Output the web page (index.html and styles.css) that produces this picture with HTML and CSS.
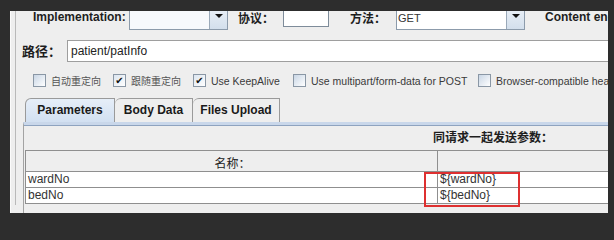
FILE: index.html
```html
<!DOCTYPE html>
<html>
<head>
<meta charset="utf-8">
<link rel="stylesheet" href="styles.css">
</head>
<body>
<div class="panel">
  <div class="content">
    <div class="row1">
      <span class="lbl lbl-impl">Implementation:</span>
      <div class="combo combo-impl">
        <div class="combo-field"></div>
        <div class="combo-btn"><span class="tri"></span></div>
      </div>
      <span class="lbl lbl-cjk lbl-proto">协议：</span>
      <div class="tfield"></div>
      <span class="lbl lbl-cjk lbl-method">方法：</span>
      <div class="combo combo-method">
        <div class="combo-field"><span class="combo-text">GET</span></div>
        <div class="combo-btn"><span class="tri"></span></div>
      </div>
      <span class="lbl lbl-enc">Content encoding:</span>
    </div>
    <div class="row2">
      <span class="lbl lbl-cjk lbl-path">路径：</span>
      <div class="pathfield">patient/patInfo</div>
    </div>
    <div class="row3">
      <label class="cb"><span class="box"></span><span class="cbt cjk">自动重定向</span></label>
      <label class="cb"><span class="box checked">✔</span><span class="cbt cjk">跟随重定向</span></label>
      <label class="cb"><span class="box checked">✔</span><span class="cbt">Use KeepAlive</span></label>
      <label class="cb"><span class="box"></span><span class="cbt">Use multipart/form-data for POST</span></label>
      <label class="cb"><span class="box"></span><span class="cbt">Browser-compatible headers</span></label>
    </div>
    <div class="tabs-area">
      <div class="tabstrip">
        <div class="tab tab-sel tab-params">Parameters</div>
        <div class="tab tab-body">Body Data</div>
        <div class="tab tab-files">Files Upload</div>
      </div>
      <div class="tabpanel">
        <div class="send-lbl">同请求一起发送参数：</div>
        <div class="table">
          <div class="trow thead">
            <div class="cell c1">名称：</div>
            <div class="cell c2"></div>
          </div>
          <div class="trow tbody">
            <div class="cell c1">wardNo</div>
            <div class="cell c2">${wardNo}</div>
          </div>
          <div class="trow tbody">
            <div class="cell c1">bedNo</div>
            <div class="cell c2">${bedNo}</div>
          </div>
        </div>
      </div>
    </div>
  </div>
  <div class="redbox"></div>
</div>
</body>
</html>
```
FILE: styles.css
```css
html, body {
  margin: 0;
  padding: 0;
}
body {
  width: 614px;
  height: 224px;
  background: #2d2d2d;
  overflow: hidden;
  font-family: "Liberation Sans", Arial, sans-serif;
}
.panel {
  position: relative;
  margin-left: 10px;
  margin-top: 11px;
  width: 597px;
  height: 202px;
  background: #eeeeee;
  border-left: 1px solid #fbfbfb;
  overflow: hidden;
}
.content {
  margin-left: 4px;
  border-left: 1px solid #b9b9b9;
  height: 100%;
}
.lbl {
  font-weight: bold;
  font-size: 12px;
  line-height: 14px;
  color: #1e1e1e;
  white-space: nowrap;
  flex: none;
}
.lbl-cjk {
  font-family: "Noto Sans CJK SC", "Liberation Sans", sans-serif;
  font-size: 12px;
}
.row1 {
  display: flex;
  align-items: flex-start;
  margin-top: -8px;
  padding-left: 17px;
  height: 27px;
}
.lbl-impl {
  width: 96px;
  margin-top: 7px;
}
.combo {
  display: flex;
  flex: none;
  height: 27px;
  box-sizing: border-box;
  border: 1px solid #8c9bab;
  background: #ffffff;
}
.combo-impl { width: 99px; }
.combo-method { width: 129px; }
.combo-field {
  flex: 1;
  background: #f7f9fc;
}
.combo-method .combo-field { background: #ffffff; }
.combo-text {
  display: block;
  padding: 8px 0 0 1px;
  font-size: 11px;
  line-height: 12px;
  color: #333;
}
.combo-btn {
  width: 18px;
  border-left: 1px solid #9aa9b9;
  background: linear-gradient(#eef3f9, #d3dfec);
  display: flex;
  justify-content: center;
  padding-top: 10px;
  box-sizing: border-box;
}
.tri {
  width: 0;
  height: 0;
  border-left: 4px solid transparent;
  border-right: 4px solid transparent;
  border-top: 4px solid #111;
}
.lbl-proto {
  width: 45px;
  margin-left: 10px;
  margin-top: 8px;
}
.tfield {
  flex: none;
  width: 46px;
  height: 24px;
  box-sizing: border-box;
  border: 1px solid #7e8c9a;
  background: #fff;
}
.lbl-method {
  width: 46px;
  margin-left: 21px;
  margin-top: 8px;
}
.lbl-enc {
  margin-left: 20px;
  margin-top: 7px;
}
.row2 {
  display: flex;
  align-items: center;
  margin-top: 10px;
  height: 22px;
}
.lbl-path {
  width: 45px;
  margin-left: 6px;
  font-size: 13px;
}
.pathfield {
  flex: 1;
  height: 22px;
  box-sizing: border-box;
  margin-right: -10px;
  border: 1px solid #9e9e9e;
  background: #fff;
  font-size: 12px;
  line-height: 20px;
  padding-left: 3px;
  color: #222;
}
.row3 {
  display: grid;
  grid-template-columns: 80px 80px 100px 185px auto;
  margin-top: 11px;
  padding-left: 17px;
  height: 14px;
  align-items: center;
  white-space: nowrap;
}
.cb {
  display: flex;
  align-items: center;
}
.box {
  width: 11px;
  height: 11px;
  border: 1px solid #8a97a5;
  background: linear-gradient(135deg, #c9d6e5, #ffffff);
  font-size: 10px;
  line-height: 11px;
  text-align: center;
  color: #111;
  font-family: "DejaVu Sans", sans-serif;
  flex: none;
}
.box.checked {
  background: linear-gradient(135deg, #dce5ef, #ffffff);
}
.cbt {
  margin-left: 5px;
  font-size: 10.5px;
  color: #3a3a3a;
}
.cbt.cjk {
  font-family: "Noto Sans CJK SC", sans-serif;
  font-size: 10px;
  color: #555;
}
.tabs-area {
  margin-top: 11px;
  margin-left: 7px;
}
.tabstrip {
  display: flex;
  padding-left: 2px;
  height: 24px;
  align-items: flex-end;
}
.tab {
  box-sizing: border-box;
  height: 24px;
  border: 1px solid #9a9a9a;
  border-bottom: none;
  border-top-left-radius: 6px;
  font-weight: bold;
  font-size: 12px;
  line-height: 22px;
  color: #1a1a1a;
  text-align: center;
  background: #eeeeee;
}
.tab + .tab { border-left: none; }
.tab-params {
  width: 90px;
  background: linear-gradient(#e6eef8, #d2e0f1);
}
.tab-body { width: 78px; }
.tab-files { width: 87px; }
.tabpanel {
  border-top: 3px solid #c9d7ea;
  border-left: 1px solid #a3a3a3;
  height: 100px;
  box-shadow: inset 0 1px 0 #8ea3bf;
}
.send-lbl {
  padding-top: 4px;
  padding-left: 409px;
  font-family: "Noto Sans CJK SC", "Liberation Sans", sans-serif;
  font-weight: bold;
  font-size: 12px;
  line-height: 16px;
  color: #1e1e1e;
}
.table {
  margin-top: 5px;
  margin-left: 1px;
  border-left: 1px solid #8f8f8f;
  border-top: 1px solid #8f8f8f;
  margin-right: -20px;
}
.trow {
  display: flex;
  border-bottom: 1px solid #8f8f8f;
}
.thead {
  height: 20px;
  background: #eeeeee;
}
.tbody {
  height: 15px;
  background: #ffffff;
}
.cell {
  font-size: 12px;
  line-height: 15px;
  color: #333;
  white-space: nowrap;
}
.c1 {
  width: 411px;
  padding-left: 2px;
  box-sizing: border-box;
}
.c2 {
  flex: 1;
  border-left: 1px solid #8f8f8f;
  padding-left: 2px;
}
.thead .c1 {
  text-align: center;
  font-family: "Noto Sans CJK SC", "Liberation Sans", sans-serif;
  line-height: 24px;
  color: #222;
}
.redbox {
  position: absolute;
  left: 413px;
  top: 161px;
  width: 92px;
  height: 31px;
  border: 2px solid #de3030;
}
```
